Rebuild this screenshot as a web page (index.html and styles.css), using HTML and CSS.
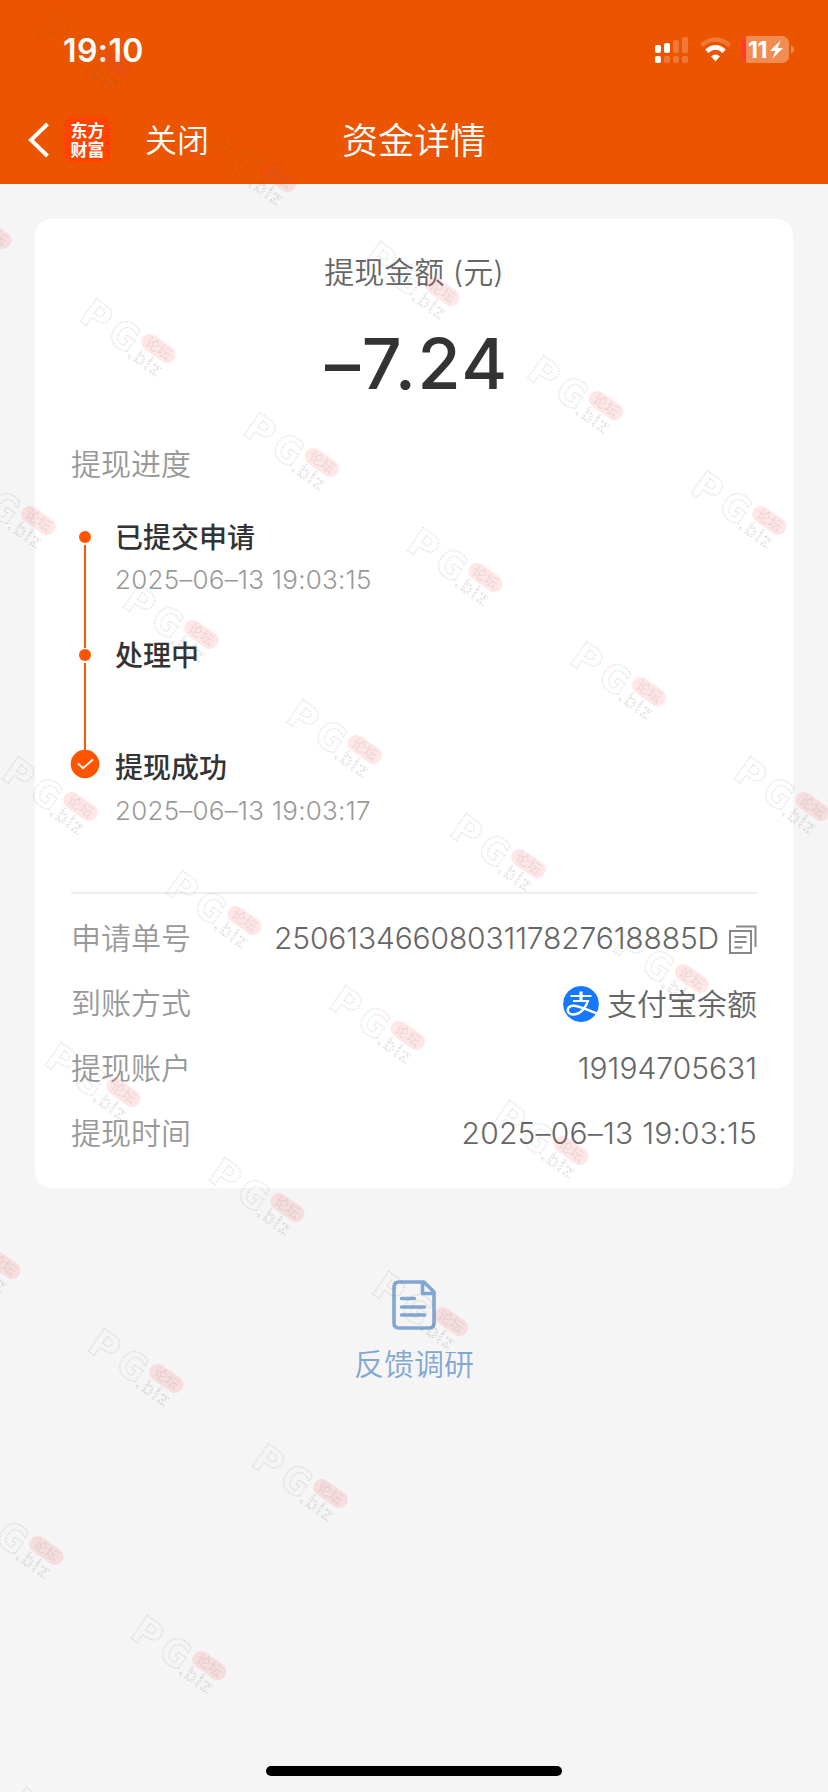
FILE: index.html
```html
<!DOCTYPE html>
<html lang="zh-CN">
<head>
<meta charset="utf-8">
<title>资金详情</title>
<link rel="stylesheet" href="styles.css">
</head>
<body>
<div class="screen">
  <header class="header">
    <div class="status">
      <span class="clock">19:10</span>
      <svg class="status-icons" width="140" height="28" viewBox="0 0 140 28">
        <g fill="#fff">
          <rect x="0" y="9" width="6" height="8" rx="2"/><rect x="9" y="7" width="6" height="10" rx="2"/>
          <rect x="0" y="20" width="6" height="7" rx="2"/>
          <g opacity=".22"><rect x="18" y="4" width="6" height="13" rx="2"/><rect x="27" y="1" width="6" height="16" rx="2"/>
          <rect x="9" y="20" width="6" height="7" rx="2"/><rect x="18" y="20" width="6" height="7" rx="2"/><rect x="27" y="20" width="6" height="7" rx="2"/></g>
        </g>
        <g fill="none" stroke="#fff">
          <path d="M46.3 9.5Q60.5-2.6 74.700 9.500" stroke-width="4.200" opacity=".22"/>
          <path d="M51.800 15.200Q60.500 7.600 69.200 15.200" stroke-width="4.600"/>
        </g>
        <path d="M56 20.400Q60.500 16.800 65 20.400L60.500 25.200Z" fill="#fff"/>
        <clipPath id="batt"><rect x="86" y="0" width="48" height="27" rx="7"/></clipPath>
        <g clip-path="url(#batt)"><rect x="86" width="48" height="27" fill="#f18c52"/><rect x="86" width="5" height="27" fill="#ff3b30"/></g>
        <path d="M136 9.500Q139 10.500 139 13.500T136 17.500Z" fill="#f18c52"/>
        <text x="93" y="22" class="batt-num">11</text>
        <path d="M125.500 4.500L115 15h5.300l-2.800 7.500L128 12h-5.300Z" fill="#fff"/>
      </svg>
    </div>
    <nav class="nav">
      <svg class="back" width="22" height="36" viewBox="0 0 22 36"><path d="M19.500 2L3 18l16.500 16" fill="none" stroke="#fff" stroke-width="4"/></svg>
      <div class="logo">东方<br>财富</div>
      <span class="close">关闭</span>
      <h1 class="title">资金详情</h1>
    </nav>
  </header>

  <main class="card">
    <div class="amount-label">提现金额 (元)</div>
    <div class="amount">–7.24</div>
    <div class="section-label">提现进度</div>
    <ol class="steps">
      <li class="step step-a"><i class="dot"></i><i class="line"></i><b>已提交申请</b><time>2025–06–13 19:03:15</time></li>
      <li class="step step-b"><i class="dot"></i><i class="line"></i><b>处理中</b></li>
      <li class="step step-c">
        <svg class="check" width="30" height="30" viewBox="0 0 30 30"><circle cx="15" cy="15" r="14.300" fill="#ff5500"/><path d="M8 14.500l5 4.700 10-8.700" fill="none" stroke="#fff" stroke-width="1.800"/></svg>
        <b>提现成功</b><time>2025–06–13 19:03:17</time></li>
    </ol>
    <dl class="details">
      <div class="row"><dt>申请单号</dt><dd class="order"><span>2506134660803117827618885D</span>
        <svg width="28" height="30" viewBox="0 0 28 30" fill="none" stroke="#888" stroke-width="2"><path d="M1 6h21v22H1zM7 1.500h19.500V22"/><path d="M5.500 12h12M5.500 17h12M5.500 22.500h8"/></svg></dd></div>
      <div class="row"><dt>到账方式</dt><dd class="pay">
        <svg width="36" height="36" viewBox="0 0 36 36"><clipPath id="ali"><circle cx="18" cy="18" r="18"/></clipPath><g clip-path="url(#ali)"><circle cx="18" cy="18" r="18" fill="#1677ff"/><g fill="none" stroke="#fff"><path d="M7.500 10h21M10 15h16" stroke-width="2"/><path d="M18 5.500v9.500" stroke-width="3.200"/><path d="M25 14.500C23 22 17 28.500 10 28.500c-7 0-7-8.500 0-8.800 7-.3 14 4.800 25 8" stroke-width="2.500"/></g></g></svg>
        <span>支付宝余额</span></dd></div>
      <div class="row"><dt>提现账户</dt><dd class="phone">19194705631</dd></div>
      <div class="row"><dt>提现时间</dt><dd class="when">2025–06–13 19:03:15</dd></div>
    </dl>
  </main>

  <footer class="feedback">
    <svg width="44" height="50" viewBox="0 0 44 50" fill="none" stroke="#83a7d4" stroke-width="3.600" stroke-linecap="round" stroke-linejoin="round"><path d="M32 2H7Q2 2 2 7v36q0 5 5 5h30q5 0 5-5V12ZM30.500 2.500V13.500H41.500M9.500 18.500h13M9.500 27h23M9.500 35h23"/></svg>
    <span>反馈调研</span>
  </footer>
  <div class="home-bar"></div>

  <svg class="watermarks" width="828" height="1792" viewBox="0 0 828 1792">
    <defs>
      <g id="wm">
        <g transform="translate(0 22) rotate(35)">
          <text class="wm-big" x="-3" y="0">P</text>
          <text class="wm-big" transform="translate(31 0) scale(.88 1)">G</text>
          <text class="wm-small" x="58" y="2">.biz</text>
          <rect x="61" y="-31" width="38" height="17" rx="8.500" fill="#ff3038" opacity=".12"/>
          <text class="wm-pill" x="66" y="-17.500">论坛</text>
        </g>
      </g>
    </defs>
    <use href="#wm" x="37" y="13"/><use href="#wm" x="200.500" y="128"/><use href="#wm" x="364" y="242"/><use href="#wm" x="527.500" y="356"/><use href="#wm" x="691" y="471"/>
    <use href="#wm" x="-84" y="185"/><use href="#wm" x="80" y="299"/><use href="#wm" x="243.500" y="413"/><use href="#wm" x="407" y="528"/><use href="#wm" x="570.500" y="642"/><use href="#wm" x="734" y="757"/>
    <use href="#wm" x="-40" y="471"/><use href="#wm" x="123" y="585"/><use href="#wm" x="286.500" y="700"/><use href="#wm" x="450" y="814"/><use href="#wm" x="613.500" y="929"/>
    <use href="#wm" x="2" y="757"/><use href="#wm" x="166" y="871"/><use href="#wm" x="329.500" y="986"/><use href="#wm" x="493" y="1101"/>
    <use href="#wm" x="45" y="1043"/><use href="#wm" x="209" y="1158"/><use href="#wm" x="372.500" y="1272"/>
    <use href="#wm" x="-75" y="1215"/><use href="#wm" x="88" y="1329"/><use href="#wm" x="252" y="1444"/>
    <use href="#wm" x="-32" y="1501"/><use href="#wm" x="131" y="1616"/><use href="#wm" x="10" y="1788"/>
  </svg>
</div>
</body>
</html>
```
FILE: styles.css
```css
* { box-sizing: border-box; margin: 0; padding: 0; }
body { background: #f5f5f5; font-family: Inter, "Noto Sans CJK SC", sans-serif; font-weight: 350; }
.screen { position: relative; width: 828px; height: 1792px; overflow: hidden; display: flex; flex-direction: column; }

.header { height: 184px; flex: none; background: #eb5500; color: #fff; }
.status { height: 97px; display: flex; justify-content: space-between; align-items: center; padding: 3px 33px 0 63px; }
.clock { font-size: 32px; font-weight: 600; letter-spacing: .4px; }
.status-icons { margin-top: -1px; }
.batt-num { font: 700 23px Inter, sans-serif; fill: #fff; letter-spacing: -.5px; }
.nav { position: relative; height: 87px; display: flex; align-items: center; padding: 0 28px; }
.back { margin-top: -1px; }
.logo { width: 47px; height: 47px; margin: -2px 0 0 14px; padding-top: 4px; border-radius: 9px; background: #ff4400; text-align: center; font: 700 17px/19px "Noto Sans CJK SC", sans-serif; }
.close { margin: -5px 0 0 34px; font-size: 32px; }
.title { position: absolute; left: 0; right: 0; top: 18px; text-align: center; font-size: 36px; line-height: 52px; font-weight: 350; }

.card { margin: 35px 35px 0; height: 969px; flex: none; padding: 31px 36px 0; border-radius: 16px; background: #fff; }
.amount-label { height: 44px; line-height: 44px; text-align: center; font-size: 30px; color: #666; }
.amount { height: 90px; margin-top: 25px; padding-left: 6px; line-height: 90px; text-align: center; font-size: 70px; font-weight: 540; letter-spacing: 1.7px; color: #333; }
.section-label { height: 44px; margin-top: 33px; line-height: 44px; font-size: 30px; color: #999; }
.steps { list-style: none; height: 378px; margin-top: 30px; border-bottom: 2px solid #eee; }
.step { position: relative; padding-left: 44px; }
.step b { display: block; height: 40px; padding-top: 2px; line-height: 40px; font-size: 28px; font-weight: 500; color: #333; }
.step time { display: block; height: 40px; margin-top: 4px; line-height: 40px; font-size: 26px; letter-spacing: .22px; color: #999; white-space: nowrap; }
.step-a { height: 118px; }
.step-b { height: 113px; }
.dot { position: absolute; left: 8px; top: 15px; width: 12px; height: 12px; border-radius: 50%; background: #ff5500; }
.line { position: absolute; left: 13px; top: 29px; width: 2px; background: #ff5500; }
.step-a .line { height: 103px; }
.step-b .line { height: 88px; }
.step-c b { padding-top: 1px; }
.check { position: absolute; left: -1px; top: 2px; }

.details { padding-top: 11px; }
.row { display: flex; justify-content: space-between; align-items: center; height: 65px; font-size: 30px; color: #666; }
.row dt { margin-top: -3px; color: #999; }
.row dd { display: flex; align-items: center; white-space: nowrap; }
.order { gap: 10px; letter-spacing: -.14px; }
.order svg { margin-top: 4px; }
.pay { gap: 8px; }
.pay svg { margin-top: 2px; }
.pay span { margin-top: -2px; }
.when { letter-spacing: .22px; }

.feedback { margin-top: 92px; display: flex; flex-direction: column; align-items: center; color: #83a7d4; font-size: 30px; line-height: 44px; }
.feedback span { margin-top: 12px; }
.home-bar { position: absolute; left: 266px; bottom: 16px; width: 296px; height: 10px; border-radius: 5px; background: #000; }

.watermarks { position: absolute; inset: 0; pointer-events: none; }
.wm-big { font: 700 38px "DejaVu Sans", sans-serif; fill: none; stroke: #555; stroke-width: 1.5px; stroke-dasharray: 1 1.500; opacity: .2; }
.wm-small { font: 400 18px "DejaVu Sans", sans-serif; letter-spacing: 1.5px; fill: none; stroke: #555; stroke-width: .8px; stroke-dasharray: 2 1.500; opacity: .24; }
.wm-pill { font: 400 14px "Noto Sans CJK SC", sans-serif; fill: #777; opacity: .14; }
```
